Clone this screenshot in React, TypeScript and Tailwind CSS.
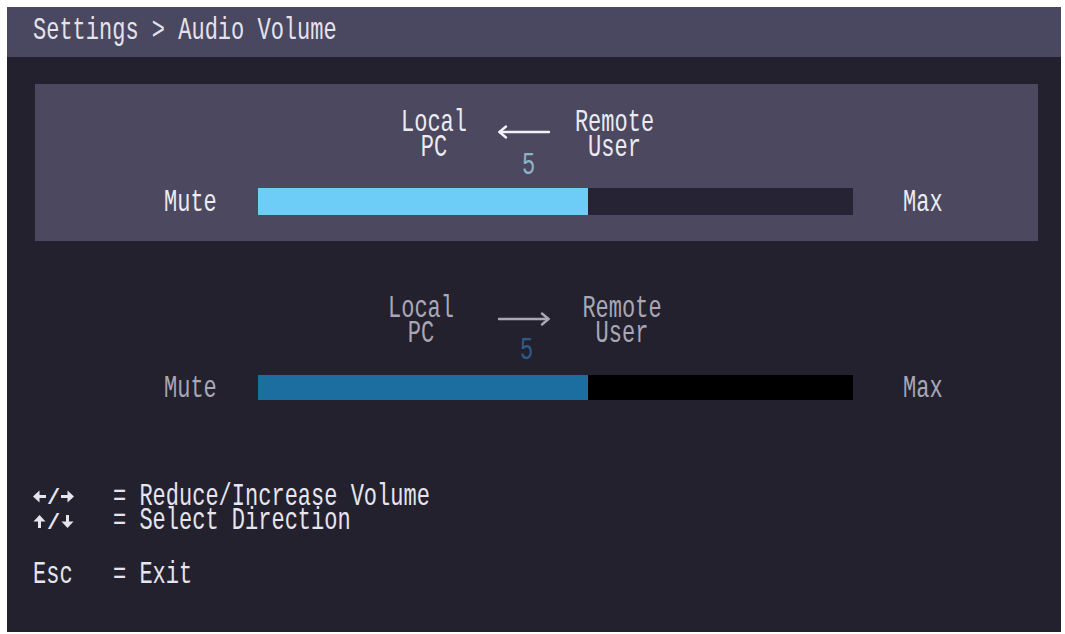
import React from "react";

const mono = "font-['Liberation_Mono','DejaVu_Sans_Mono',monospace]";

// Tall, narrow terminal-style text: a 22px mono face stretched vertically.
// The outer span reserves a 24px line; the inner one carries the stretch.
function Txt({ children, className = "" }: { children: React.ReactNode; className?: string }) {
  return (
    <span className={`block py-[4px] ${className}`}>
      <span
        className={`block origin-center scale-y-[1.45] whitespace-pre text-[22px] leading-[16px] ${mono}`}
      >
        {children}
      </span>
    </span>
  );
}

// Two stacked lines in one block (24px pitch after the stretch).
function Txt2({ children, className = "" }: { children: React.ReactNode; className?: string }) {
  return (
    <span className={`block py-[7.5px] ${className}`}>
      <span
        className={`block origin-center scale-y-[1.45] whitespace-pre text-[22px] leading-[16.5px] ${mono}`}
      >
        {children}
      </span>
    </span>
  );
}

// Two stacked lines in one block (25px pitch after the stretch).
function Txt2Wide({ children, className = "" }: { children: React.ReactNode; className?: string }) {
  return (
    <span className={`block pt-[7.4px] pb-[7.1px] ${className}`}>
      <span
        className={`block origin-center scale-y-[1.45] whitespace-pre text-[22px] leading-[17.25px] ${mono}`}
      >
        {children}
      </span>
    </span>
  );
}

function LongArrow({ dir, color }: { dir: "left" | "right"; color: string }) {
  return (
    <svg width="54" height="14" viewBox="0 0 54 14" className="block">
      {dir === "left" ? (
        <g fill="none" stroke={color} strokeWidth="2.4" strokeLinecap="round" strokeLinejoin="round">
          <line x1="2.5" y1="7" x2="52" y2="7" />
          <polyline points="9,1.5 2.5,7 9,12.5" />
        </g>
      ) : (
        <g fill="none" stroke={color} strokeWidth="2.4" strokeLinecap="round" strokeLinejoin="round">
          <line x1="2" y1="7" x2="51.5" y2="7" />
          <polyline points="45,1.5 51.5,7 45,12.5" />
        </g>
      )}
    </svg>
  );
}

// Small bold key arrows with filled heads.
function KeyArrow({ dir }: { dir: "left" | "right" | "up" | "down" }) {
  const c = "#e6e5ee";
  return (
    <svg width="13" height="13" viewBox="0 0 13 13" className="block">
      {dir === "left" && (
        <g fill={c}>
          <polygon points="0,6.5 6.5,0.5 6.5,12.5" />
          <rect x="5.5" y="5" width="7.5" height="3" />
        </g>
      )}
      {dir === "right" && (
        <g fill={c}>
          <polygon points="13,6.5 6.5,0.5 6.5,12.5" />
          <rect x="0" y="5" width="7.5" height="3" />
        </g>
      )}
      {dir === "up" && (
        <g fill={c}>
          <polygon points="6.5,0 0.5,6.5 12.5,6.5" />
          <rect x="5" y="5.5" width="3" height="7.5" />
        </g>
      )}
      {dir === "down" && (
        <g fill={c}>
          <polygon points="6.5,13 0.5,6.5 12.5,6.5" />
          <rect x="5" y="0" width="3" height="7.5" />
        </g>
      )}
    </svg>
  );
}

function KeyPair({ a, b }: { a: "left" | "up"; b: "right" | "down" }) {
  return (
    <div className="flex items-start h-[25px]">
      <div className="mt-[5px]">
        <KeyArrow dir={a} />
      </div>
      <span className={`block ml-[1px] mt-[2px] text-[22px] leading-[24px] font-bold text-[#e6e5ee] ${mono}`}>/</span>
      <div className="ml-[1px] mt-[5px]">
        <KeyArrow dir={b} />
      </div>
    </div>
  );
}

export default function App() {
  return (
    <div className="w-[1065px] h-[634px] bg-white pt-[7px] pl-[7px]">
      <div className="w-[1054px] h-[625px] bg-[#24212f] flex flex-col">
        {/* breadcrumb bar */}
        <div className="h-[50px] bg-[#4a4760] flex items-center pl-[26px] shrink-0">
          <Txt className="text-[#e4e3ec]">Settings &gt; Audio Volume</Txt>
        </div>

        {/* Remote user -> local PC (selected) */}
        <div className="mt-[27px] ml-[28px] mr-[23px] h-[157px] bg-[#4b485f] pt-[28px] shrink-0">
          <div className="h-[76px] flex items-start pl-[359px]">
            <Txt2 className="w-[80px] text-center text-[#ecebf2]">{"Local\nPC"}</Txt2>
            <div className="ml-[23px] w-[54px] flex flex-col">
              <div className="mt-[13px]">
                <LongArrow dir="left" color="#f2f1f7" />
              </div>
              <Txt className="mt-[16px] pl-[25px] text-[#8fb3c9]">5</Txt>
            </div>
            <Txt2 className="w-[127px] text-center text-[#ecebf2]">{"Remote\nUser"}</Txt2>
          </div>
          <div className="flex items-start pl-[129px] h-[27px]">
            <Txt className="w-[94px] mt-[4px] text-[#ecebf2]">Mute</Txt>
            <div className="w-[595px] h-[27px] bg-[#262334] flex">
              <div className="w-[330px] h-full bg-[#6ecdf7]" />
            </div>
            <Txt className="ml-[50px] mt-[4px] text-[#ecebf2]">Max</Txt>
          </div>
        </div>

        {/* Local PC -> remote user */}
        <div className="mt-[30px] ml-[28px] mr-[23px] pt-[27px] shrink-0">
          <div className="h-[77px] flex items-start pl-[346px]">
            <Txt2 className="w-[80px] text-center text-[#a9a7b6]">{"Local\nPC"}</Txt2>
            <div className="ml-[36px] w-[54px] flex flex-col">
              <div className="mt-[14px]">
                <LongArrow dir="right" color="#a9a7b6" />
              </div>
              <Txt className="mt-[14px] pl-[23px] text-[#2c5d8a]">5</Txt>
            </div>
            <Txt2 className="w-[142px] text-center text-[#a9a7b6]">{"Remote\nUser"}</Txt2>
          </div>
          <div className="flex items-start pl-[129px] h-[25px]">
            <Txt className="w-[94px] mt-[3px] text-[#a9a7b6]">Mute</Txt>
            <div className="w-[595px] h-[25px] bg-black flex">
              <div className="w-[330px] h-full bg-[#1b6e9f]" />
            </div>
            <Txt className="ml-[50px] mt-[3px] text-[#a9a7b6]">Max</Txt>
          </div>
        </div>

        {/* key help */}
        <div className="mt-[85px] pl-[26px] flex flex-col text-[#e6e5ee]">
          <div className="flex items-start">
            <div className="w-[80px] flex flex-col">
              <KeyPair a="left" b="right" />
              <KeyPair a="up" b="down" />
            </div>
            <Txt2Wide>{"= Reduce/Increase Volume\n= Select Direction"}</Txt2Wide>
          </div>
          <div className="flex items-start mt-[29px]">
            <Txt className="w-[80px]">Esc</Txt>
            <Txt>= Exit</Txt>
          </div>
        </div>
      </div>
    </div>
  );
}
